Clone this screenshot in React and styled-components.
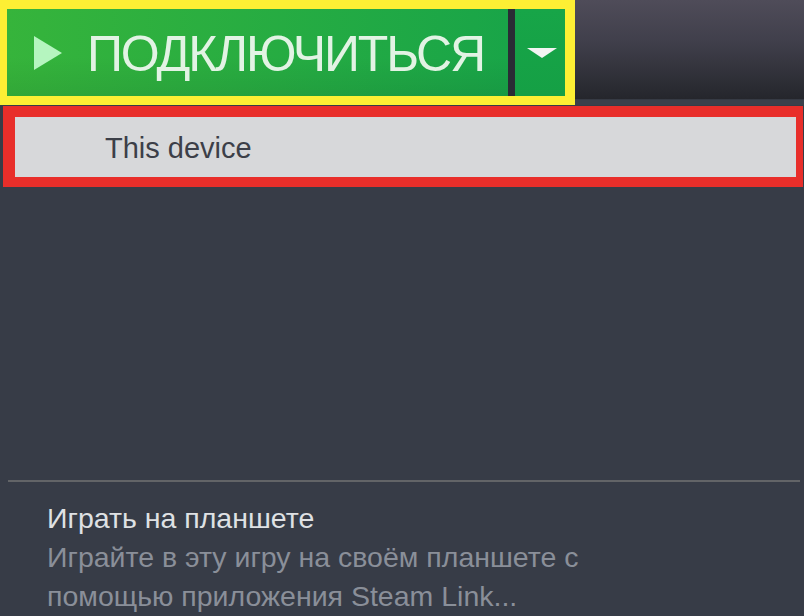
import React from "react";
import styled, { createGlobalStyle } from "styled-components";

const GlobalStyle = createGlobalStyle`
  html, body {
    margin: 0;
    padding: 0;
    background: #373c47;
  }
`;

const App = () => {
  return (
    <Page>
      <GlobalStyle />
      <TopRow>
        <Highlight>
          <ConnectButton>
            <PlayIcon viewBox="0 0 30 36">
              <polygon points="1,1 29,18 1,35" />
            </PlayIcon>
            <ConnectLabel>ПОДКЛЮЧИТЬСЯ</ConnectLabel>
          </ConnectButton>
          <Separator />
          <DropButton>
            <Caret viewBox="0 0 30 10">
              <polygon points="0,0 30,0 15,10" />
            </Caret>
          </DropButton>
        </Highlight>
        <HeaderFill />
      </TopRow>

      <MenuOutline>
        <MenuItem>This device</MenuItem>
      </MenuOutline>

      <Spacer />

      <Divider />
      <Info>
        <InfoTitle>Играть на планшете</InfoTitle>
        <InfoText>
          Играйте в эту игру на своём планшете с
          <br />
          помощью приложения Steam Link...
        </InfoText>
      </Info>
    </Page>
  );
};

const Page = styled.div`
  width: 804px;
  height: 616px;
  overflow: hidden;
  display: flex;
  flex-direction: column;
  background: #373c47;
  font-family: "Liberation Sans", Arial, sans-serif;
`;

const TopRow = styled.div`
  display: flex;
  height: 105px;
`;

const Highlight = styled.div`
  display: flex;
  flex-shrink: 0;
  border: 9px solid #fdef34;
  border-left-width: 7px;
  border-right-width: 10px;
  background: #2a2c35;
`;

const ConnectButton = styled.div`
  width: 501px;
  display: flex;
  align-items: center;
  padding-left: 26px;
  box-sizing: border-box;
  background: linear-gradient(to bottom, rgba(0, 0, 0, 0) 55%, rgba(0, 0, 0, 0.07)),
    linear-gradient(to right, #36b43b, #19a548);
`;

const PlayIcon = styled.svg`
  width: 30px;
  height: 36px;
  fill: #b5f5bf;
  margin-right: 24px;
`;

const ConnectLabel = styled.span`
  font-size: 50px;
  color: #e2f3e4;
  letter-spacing: -2.1px;
  line-height: 1;
  padding-top: 2px;
`;

const Separator = styled.div`
  width: 7px;
  background: #2a2c35;
`;

const DropButton = styled.div`
  width: 50px;
  display: flex;
  align-items: center;
  justify-content: center;
  padding-left: 4px;
  box-sizing: border-box;
  background: linear-gradient(to bottom, #17a548, #15a045);
`;

const Caret = styled.svg`
  width: 30px;
  height: 10px;
  fill: #f2f4f2;
`;

const HeaderFill = styled.div`
  flex: 1;
  background: linear-gradient(
    to bottom,
    #4f4c59 0%,
    #403f4b 40%,
    #2c2d34 80%,
    #25262c 94%,
    #3b404b 95%,
    #3b404b 100%
  );
`;

const MenuOutline = styled.div`
  margin: 1px 0 0 3px;
  width: 800px;
  box-sizing: border-box;
  border: 11px solid #e82e2a;
  border-left-width: 12px;
  border-bottom-width: 10px;
  border-right-width: 7px;
`;

const MenuItem = styled.div`
  height: 60px;
  display: flex;
  align-items: center;
  padding: 2px 0 0 90px;
  box-sizing: border-box;
  background: #d7d8da;
  color: #3c3f48;
  font-size: 29px;
`;

const Spacer = styled.div`
  flex: 1;
`;

const Divider = styled.div`
  margin: 0 4px 0 8px;
  height: 2px;
  background: #626467;
`;

const Info = styled.div`
  padding: 17px 0 0 47px;
  display: flex;
  flex-direction: column;
  font-size: 28.5px;
  line-height: 39px;
`;

const InfoTitle = styled.div`
  color: #dfe1e4;
`;

const InfoText = styled.div`
  color: #8a8f99;
`;

export default App;
